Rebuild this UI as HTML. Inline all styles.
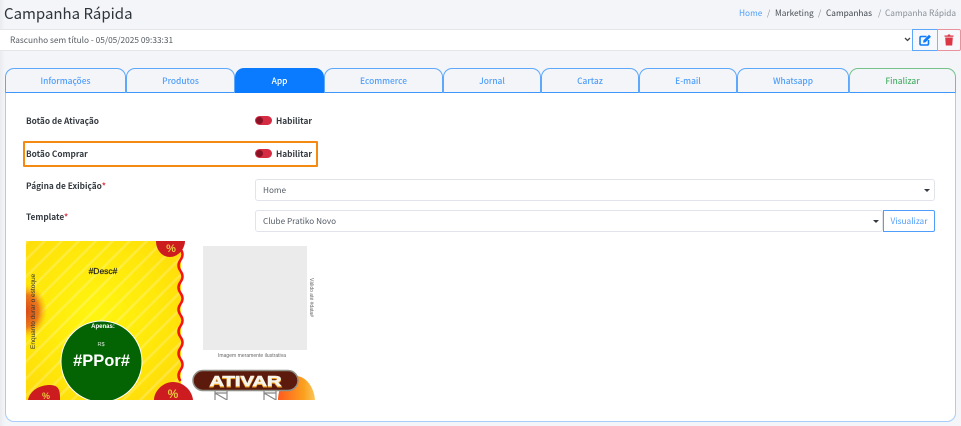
<!DOCTYPE html>
<html lang="pt-BR"><head><meta charset="utf-8"><title>Campanha Rápida</title>
<style>
*{box-sizing:border-box}
html,body{margin:0;padding:0}
body{width:961px;height:426px;overflow:hidden;position:relative;background:#f3f5f9;font-family:"Noto Sans CJK SC","Liberation Sans",sans-serif;color:#343a40;font-size:9px}
.a{position:absolute;white-space:nowrap}
.tab{position:absolute;top:68px;height:25px;border:1px solid #5ea8fb;border-bottom:none;border-radius:9px 9px 0 0;color:#4f9efb;text-align:center;font-size:8.4px;line-height:25px;font-weight:500}
.lbl{font-weight:700;font-size:8.3px;color:#343a40;line-height:14px}
.sw{position:absolute;left:255px;width:17px;height:9px;border-radius:5px;background:#d52c43}
.sw i{position:absolute;left:1px;top:1px;width:7px;height:7px;border-radius:50%;background:#8a1226}
.sel{position:absolute;background:#fff;border:1px solid #e1e4ea;border-radius:3px;color:#555d66;font-size:8.2px;padding-left:7px}
.car{position:absolute;width:0;height:0;border-left:3px solid transparent;border-right:3px solid transparent;border-top:3px solid #343a40}
.bc{position:absolute;top:5px;font-size:8.3px;line-height:16px;color:#888f96;white-space:nowrap}
</style></head><body>
<div class="a" style="left:0;top:0;width:5px;height:426px;background:linear-gradient(90deg,#e9ebef,#f3f5f9)"></div>
<div class="a" style="left:4px;top:2px;font-size:15px;line-height:24px;color:#2f353b">Campanha Rápida</div>
<span class="bc" style="left:739px;color:#4f9efb">Home</span>
<span class="bc" style="left:767px">/</span>
<span class="bc" style="left:775px;color:#4b5157">Marketing</span>
<span class="bc" style="left:818px">/</span>
<span class="bc" style="left:826px;color:#3e444a">Campanhas</span>
<span class="bc" style="left:878px">/</span>
<span class="bc" style="left:885px">Campanha Rápida</span>
<div class="a" style="left:0;top:29px;width:913px;height:22px;background:#fff;border:1px solid #e4e6ea;border-left:none;font-size:8.3px;line-height:20px;padding-left:10px;color:#555b61">Rascunho sem título - 05/05/2025 09:33:31</div>
<svg class="a" style="left:904px;top:37px" width="7" height="5" viewBox="0 0 7 5"><path d="M1 1l2.500 2.500L6 1" fill="none" stroke="#444" stroke-width="1.300"/></svg>
<div class="a" style="left:912px;top:29px;width:26px;height:22px;border:1px solid #5ea8fb;background:#f6f8fc"></div>
<div class="a" style="left:937px;top:29px;width:24px;height:22px;border:1px solid #e8929c;background:#f6f8fc;border-radius:0 2px 2px 0"></div>
<svg class="a" style="left:919px;top:34px" width="13" height="12" viewBox="0 0 13 12"><path d="M7.500 2.500H2.200C1.500 2.500 1 3 1 3.700V9.800C1 10.500 1.500 11 2.200 11H8.300C9 11 9.500 10.500 9.500 9.800V6" fill="none" stroke="#0d7bfa" stroke-width="1.600"/><path d="M4.500 6.300L10 .8l2 2-5.500 5.500-2.400.4z" fill="#0d7bfa"/></svg>
<svg class="a" style="left:944px;top:34px" width="10" height="12" viewBox="0 0 10 12"><path d="M.5 1.500h3L4 .5h2l.5 1h3v1.300H.5zM1.200 3.500h7.600L8.200 11.500H1.800z" fill="#dc3545"/></svg>

<div class="a" style="left:5px;top:92px;width:951px;height:330px;background:#fff;border:1px solid #a9cdf8;border-radius:0 0 9px 9px"></div>
<div class="a" style="left:5px;top:92px;width:951px;height:1px;background:#3f97fb"></div>
<div class="tab" style="left:5px;width:121px">Informações</div>
<div class="tab" style="left:126px;width:109px">Produtos</div>
<div class="tab" style="left:235px;width:89px;background:#0a7bff;border-color:#0a7bff;color:#fff">App</div>
<div class="tab" style="left:324px;width:119px">Ecommerce</div>
<div class="tab" style="left:443px;width:98px">Jornal</div>
<div class="tab" style="left:541px;width:98px">Cartaz</div>
<div class="tab" style="left:639px;width:98px">E-mail</div>
<div class="tab" style="left:737px;width:112px">Whatsapp</div>
<div class="tab" style="left:849px;width:107px;border-color:#76c28c;color:#4fb06d">Finalizar</div>

<div class="a lbl" style="left:26px;top:114px">Botão de Ativação</div>
<div class="sw" style="top:116px"><i></i></div>
<div class="a lbl" style="left:276px;top:114px">Habilitar</div>

<div class="a" style="left:23px;top:141px;width:295px;height:26px;border:2px solid #f58a12;border-radius:1px"></div>
<div class="a lbl" style="left:26px;top:147px">Botão Comprar</div>
<div class="sw" style="top:149px"><i></i></div>
<div class="a lbl" style="left:276px;top:147px">Habilitar</div>

<div class="a lbl" style="left:26px;top:179px">Página de Exibição<span style="color:#dc3545">*</span></div>
<div class="sel" style="left:255px;top:179px;width:680px;height:22px;line-height:20px">Home</div>
<div class="car" style="left:924px;top:189px"></div>
<div class="a lbl" style="left:26px;top:210px">Template<span style="color:#dc3545">*</span></div>
<div class="sel" style="left:255px;top:210px;width:628px;height:22px;line-height:20px">Clube Pratiko Novo</div>
<div class="car" style="left:873px;top:220px"></div>
<div class="a" style="left:883px;top:210px;width:52px;height:22px;border:1px solid #4f9efb;border-radius:0 2px 2px 0;background:#fff;color:#4f9efb;font-size:8.3px;line-height:20px;text-align:center">Visualizar</div>

<svg class="a" style="left:26px;top:241px;filter:blur(.3px)" width="290" height="159" viewBox="0 0 290 159" font-family="Liberation Sans,sans-serif">
<defs>
<radialGradient id="y" cx=".45" cy=".45" r=".75"><stop offset="0" stop-color="#fff510"/><stop offset=".6" stop-color="#ffe60a"/><stop offset="1" stop-color="#ffd70c"/></radialGradient>
<pattern id="st" width="12" height="12" patternUnits="userSpaceOnUse" patternTransform="rotate(45)"><rect width="2.500" height="12" fill="#ffffff" opacity=".2"/></pattern>
<radialGradient id="o"><stop offset="0" stop-color="#d94a1a"/><stop offset=".6" stop-color="#ea7a1a"/><stop offset="1" stop-color="#fdb515" stop-opacity="0"/></radialGradient>
<linearGradient id="or" x1="0" x2="1"><stop offset="0" stop-color="#ff5a1e"/><stop offset=".7" stop-color="#fba11e"/><stop offset="1" stop-color="#f9c65a"/></linearGradient>
</defs>
<rect width="155" height="159" fill="url(#y)"/><rect width="155" height="159" fill="url(#st)"/>
<ellipse cx="0" cy="70" rx="21" ry="27" fill="url(#o)"/>
<path d="M154.500 8q4 5.500 0 11t0 11 0 11 0 11 0 11 0 11 0 11 0 11 0 11 0 11 0 11 0 11" fill="none" stroke="#f51414" stroke-width="2.500"/>
<path d="M130 0c0 9 6 16 14 16s15-8 15-16z" fill="#cc1c20"/><text x="145" y="11" font-size="11" font-weight="700" fill="#e8c63e" text-anchor="middle">%</text>
<path d="M2 159c2-10 12-15 22-15s10 7 10 15z" fill="#cc1c20"/><text x="20" y="158" font-size="9" font-weight="700" fill="#e8c63e" text-anchor="middle">%</text>
<path d="M128 159c0-9 9-18 19-18s19 8 20 18z" fill="#cc1c20"/><text x="147" y="157" font-size="12" font-weight="700" fill="#e8c63e" text-anchor="middle">%</text>
<text x="77" y="33" font-size="8.500" font-weight="400" fill="#222" stroke="#222" stroke-width=".2" text-anchor="middle">#Desc#</text>
<text transform="translate(9,108) rotate(-90)" font-size="6.500" fill="#333">Enquanto durar o estoque</text>
<circle cx="75.500" cy="120.500" r="40.500" fill="#046404" stroke="#fff" stroke-width="1"/>
<text x="77" y="87" font-size="6" font-weight="700" fill="#fff" text-anchor="middle">Apenas:</text>
<text x="75" y="105" font-size="5.500" fill="#d7e5d7" text-anchor="middle">R$</text>
<text x="75.500" y="125" font-size="16.500" font-weight="700" fill="#fff" text-anchor="middle">#PPor#</text>
<rect x="177" y="5" width="104" height="104" fill="#ebebeb"/>
<text x="226" y="116" font-size="5" fill="#666" text-anchor="middle" textLength="68">Imagem meramente ilustrativa</text>
<text transform="translate(284,37) rotate(90)" font-size="5" fill="#666">Válido até #data#</text>
<path d="M252 159c0-14 9-24 18-24 9 0 18 10 19 24z" fill="url(#or)"/>
<rect x="167" y="129.500" width="105" height="20" rx="10" fill="#5c1a0c" stroke="#8e9088" stroke-width="1.500"/>
<text x="219.500" y="146" font-size="15" font-weight="700" fill="#f0a020" stroke="#f0a020" stroke-width="1" text-anchor="middle" textLength="72" lengthAdjust="spacingAndGlyphs">ATIVAR</text>
<text x="219.500" y="145" font-size="15" font-weight="700" fill="#f7f4ea" stroke="#f7f4ea" stroke-width=".6" text-anchor="middle" textLength="72" lengthAdjust="spacingAndGlyphs">ATIVAR</text>
<path d="M189 150v9M201 150v9M189 152h12M189 152l12 7M238 150v9M250 150v9M238 152h12M238 152l12 7" fill="none" stroke="#888" stroke-width="1.200"/>
</svg>
</body></html>
